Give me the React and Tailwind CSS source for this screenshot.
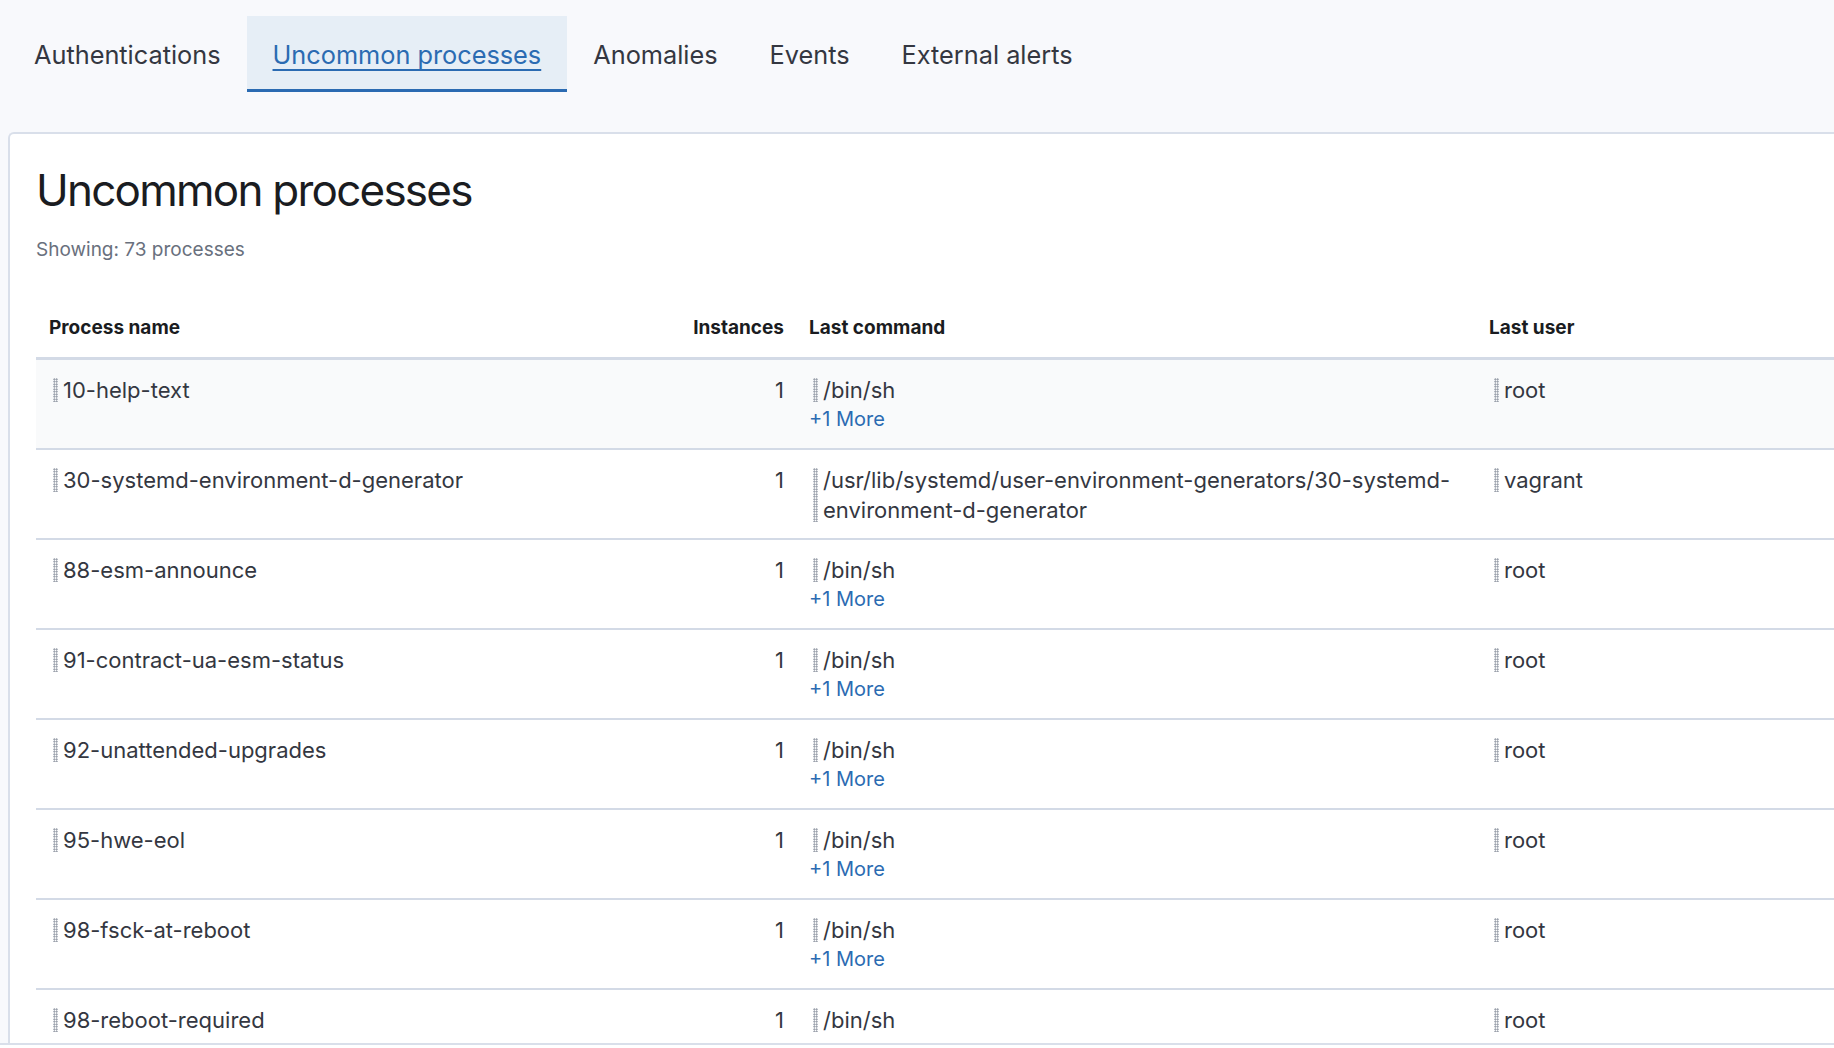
import React from 'react';

const tabs = ['Authentications', 'Uncommon processes', 'Anomalies', 'Events', 'External alerts'];

const rows = [
  { name: '10-help-text', cmd: '/bin/sh', more: true, user: 'root' },
  { name: '30-systemd-environment-d-generator', cmd: '/usr/lib/systemd/user-environment-generators/30-systemd-environment-d-generator', more: false, user: 'vagrant' },
  { name: '88-esm-announce', cmd: '/bin/sh', more: true, user: 'root' },
  { name: '91-contract-ua-esm-status', cmd: '/bin/sh', more: true, user: 'root' },
  { name: '92-unattended-upgrades', cmd: '/bin/sh', more: true, user: 'root' },
  { name: '95-hwe-eol', cmd: '/bin/sh', more: true, user: 'root' },
  { name: '98-fsck-at-reboot', cmd: '/bin/sh', more: true, user: 'root' },
  // the "+1 More" of this row sits below the fold
  { name: '98-reboot-required', cmd: '/bin/sh', more: false, user: 'root' }
];

function Handle() {
  return <span className="my-[3px] mr-[5px] w-[5px] shrink-0 self-stretch bg-[radial-gradient(circle,#8a919e_0.8px,transparent_1px)] bg-[length:2.5px_2.5px]" />;
}

function Draggable({ children, className = '' }) {
  return (
    <div className={`flex ${className}`}>
      <Handle />
      <span className="min-w-0">{children}</span>
    </div>
  );
}

export default function App() {
  return (
    <div className="flex h-[1048px] flex-col overflow-hidden bg-[#f8f9fc] font-['Inter',sans-serif] text-[#343741]">
      <div className="min-h-0 flex-1 overflow-hidden">
        <nav className="mt-4 flex pl-2">
          {tabs.map((tab) => {
            const active = tab === 'Uncommon processes';
            return (
              <div
                key={tab}
                className={
                  active
                    ? 'flex h-[76px] items-center border-b-[3px] border-[#2b6bb2] bg-[#e6eef6] px-[26px] pt-[5px] text-[25.3px] text-[#2b6bb2] underline decoration-[2px] underline-offset-[5px]'
                    : 'flex h-[76px] items-center px-[26px] pt-[2px] text-[25.3px] text-[#343741]'
                }
              >
                {tab}
              </div>
            );
          })}
        </nav>

        <section className="-mr-10 ml-2 mt-[40px] rounded-tl-md border-l-2 border-t-2 border-[#d9dfea] bg-white pl-[26px] pt-[30px]">
          <h1 className="text-[44px] font-normal leading-[53px] tracking-[-0.04em] text-[#1a1c21]">Uncommon processes</h1>
          <p className="mt-[19px] text-[19px] leading-[27px] text-[#69707d]">Showing: 73 processes</p>

          <table className="mt-[35px] w-[1900px] table-fixed border-collapse text-left">
            <colgroup>
              <col className="w-[644px]" />
              <col className="w-[117px]" />
              <col className="w-[680px]" />
              <col />
            </colgroup>
            <thead>
              <tr className="border-b-[3px] border-[#d3dae6] text-[19px] font-bold leading-[27px] text-[#1a1c21]">
                <th className="pb-4 pl-[13px] pt-4 font-bold">Process name</th>
                <th className="pb-4 pr-[13px] pt-4 text-right font-bold">Instances</th>
                <th className="pb-4 pl-[12px] pt-4 font-bold">Last command</th>
                <th className="pb-4 pl-[12px] pt-4 font-bold">Last user</th>
              </tr>
            </thead>
            <tbody className="text-[22px] leading-[30px]">
              {rows.map((row, index) => (
                <tr key={row.name} className={`border-b-2 border-[#d3dae6] ${index === 0 ? 'bg-[#f9fafb]' : ''}`}>
                  <td className="h-[90px] pl-[17px] pt-[15px] align-top">
                    <Draggable>{row.name}</Draggable>
                  </td>
                  <td className="h-[90px] pr-[13px] pt-[15px] text-right align-top">1</td>
                  <td className="h-[90px] pl-[12px] pr-[20px] pt-[15px] align-top">
                    <Draggable className="pl-[4px]">{row.cmd}</Draggable>
                    {row.more && <div className="text-[20px] leading-[28px] text-[#2b6bb2]">+1 More</div>}
                  </td>
                  <td className="h-[90px] pl-[17px] pt-[15px] align-top">
                    <Draggable>{row.user}</Draggable>
                  </td>
                </tr>
              ))}
            </tbody>
          </table>
        </section>
      </div>
      <div className="h-[5px] shrink-0 border-t-2 border-[#d9dfea] bg-white" />
    </div>
  );
}
